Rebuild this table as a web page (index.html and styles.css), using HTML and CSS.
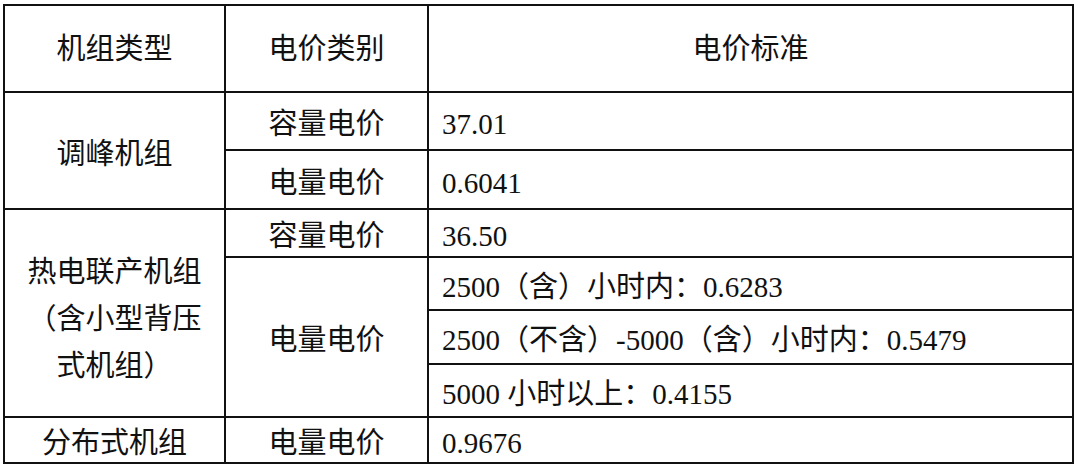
FILE: index.html
```html
<!DOCTYPE html>
<html lang="zh-CN">
<head>
<meta charset="utf-8">
<title>电价标准</title>
<link rel="stylesheet" href="styles.css">
</head>
<body>
<div class="price-table">
  <div class="cell c1 head">机组类型</div>
  <div class="cell c2 head">电价类别</div>
  <div class="cell c3 head center">电价标准</div>

  <div class="cell c1 span2">调峰机组</div>
  <div class="cell c2">容量电价</div>
  <div class="cell c3">37.01</div>
  <div class="cell c2">电量电价</div>
  <div class="cell c3">0.6041</div>

  <div class="cell c1 span4 wrap">热电联产机组（含小型背压式机组）</div>
  <div class="cell c2">容量电价</div>
  <div class="cell c3">36.50</div>
  <div class="cell c2 span3">电量电价</div>
  <div class="cell c3">2500（含）小时内：0.6283</div>
  <div class="cell c3">2500（不含）-5000（含）小时内：0.5479</div>
  <div class="cell c3">5000 小时以上：0.4155</div>

  <div class="cell c1">分布式机组</div>
  <div class="cell c2">电量电价</div>
  <div class="cell c3">0.9676</div>
</div>
</body>
</html>
```

FILE: styles.css
```css
html, body {
  margin: 0;
  padding: 0;
  background: #ffffff;
}

body {
  font-family: "Liberation Serif", "Noto Sans CJK SC", serif;
  font-size: 29px;
  font-weight: 400;
  color: #111111;
}

.price-table {
  display: grid;
  grid-template-columns: 219px 201px 643px;
  grid-template-rows: 85px 56px 57px 46px 51px 52px 51px 44px;
  gap: 2px;
  padding: 2px;
  background: #111111;
  width: 1067px;
  margin: 4px 0 0 3px;
}

.cell {
  background: #ffffff;
  display: flex;
  align-items: center;
  justify-content: center;
  line-height: 1.2;
  padding: 7px 13px 0;
  white-space: nowrap;
}

.c1 { grid-column: 1; }
.c2 { grid-column: 2; }
.c3 {
  grid-column: 3;
  justify-content: flex-start;
}
.c3.center { justify-content: center; }

.head { padding-top: 2px; }

.span2 { grid-row: span 2; }
.span3 { grid-row: span 3; }
.span4 { grid-row: span 4; }

.wrap {
  white-space: normal;
  text-align: center;
  line-height: 47px;
  padding-top: 12px;
}
```
